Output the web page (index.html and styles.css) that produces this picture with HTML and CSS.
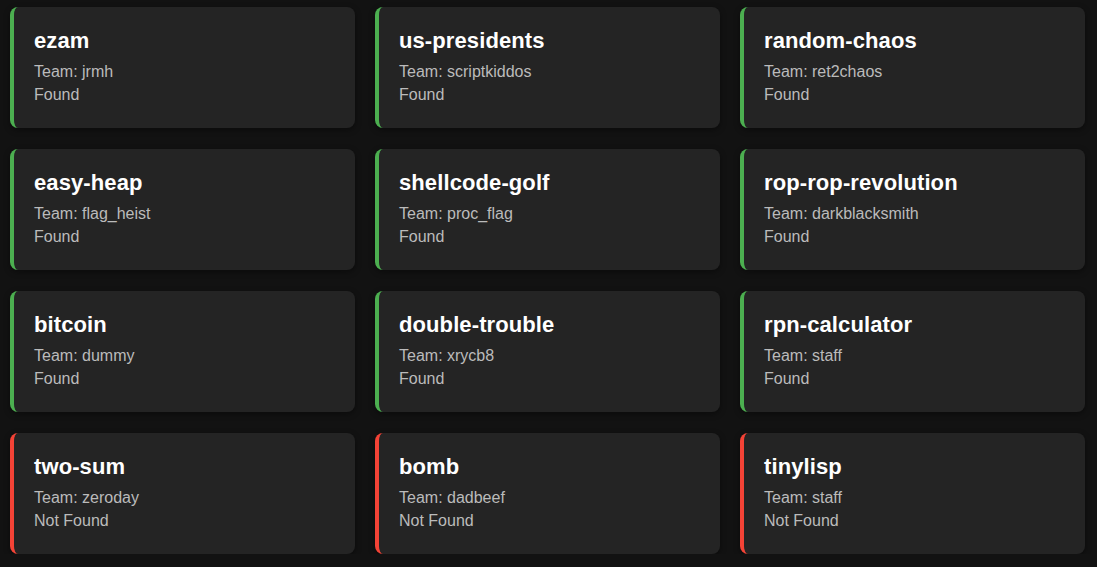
FILE: index.html
```html
<!DOCTYPE html>
<html>
<head>
<meta charset="utf-8">
<link rel="stylesheet" href="styles.css">
</head>
<body>
<div class="grid">
  <div class="card found"><h3 class="title">ezam</h3><p class="line">Team: jrmh</p><p class="line">Found</p></div>
  <div class="card found"><h3 class="title">us-presidents</h3><p class="line">Team: scriptkiddos</p><p class="line">Found</p></div>
  <div class="card found"><h3 class="title">random-chaos</h3><p class="line">Team: ret2chaos</p><p class="line">Found</p></div>
  <div class="card found"><h3 class="title">easy-heap</h3><p class="line">Team: flag_heist</p><p class="line">Found</p></div>
  <div class="card found"><h3 class="title">shellcode-golf</h3><p class="line">Team: proc_flag</p><p class="line">Found</p></div>
  <div class="card found"><h3 class="title">rop-rop-revolution</h3><p class="line">Team: darkblacksmith</p><p class="line">Found</p></div>
  <div class="card found"><h3 class="title">bitcoin</h3><p class="line">Team: dummy</p><p class="line">Found</p></div>
  <div class="card found"><h3 class="title">double-trouble</h3><p class="line">Team: xrycb8</p><p class="line">Found</p></div>
  <div class="card found"><h3 class="title">rpn-calculator</h3><p class="line">Team: staff</p><p class="line">Found</p></div>
  <div class="card missing"><h3 class="title">two-sum</h3><p class="line">Team: zeroday</p><p class="line">Not Found</p></div>
  <div class="card missing"><h3 class="title">bomb</h3><p class="line">Team: dadbeef</p><p class="line">Not Found</p></div>
  <div class="card missing"><h3 class="title">tinylisp</h3><p class="line">Team: staff</p><p class="line">Not Found</p></div>
</div>
</body>
</html>
```
FILE: styles.css
```css
html, body {
  margin: 0;
  padding: 0;
  background: #121212;
  font-family: "Liberation Sans", Arial, sans-serif;
}
.grid {
  display: grid;
  grid-template-columns: repeat(3, 345px);
  column-gap: 20px;
  row-gap: 21px;
  padding: 7px 0 0 10px;
}
.card {
  box-sizing: border-box;
  height: 121px;
  background: #242424;
  border-radius: 8px;
  border-left: 4px solid #4caf50;
  padding: 20px 20px 0 20px;
  box-shadow: 0 2px 6px rgba(0,0,0,0.4);
}
.card.missing {
  border-left-color: #f44336;
}
.title {
  margin: 0 0 5px 0;
  font-size: 22px;
  font-weight: bold;
  letter-spacing: 0.1px;
  color: #ffffff;
  line-height: 28px;
}
.line {
  margin: 0;
  font-size: 16px;
  line-height: 23px;
  color: #bbbbbb;
}
```
